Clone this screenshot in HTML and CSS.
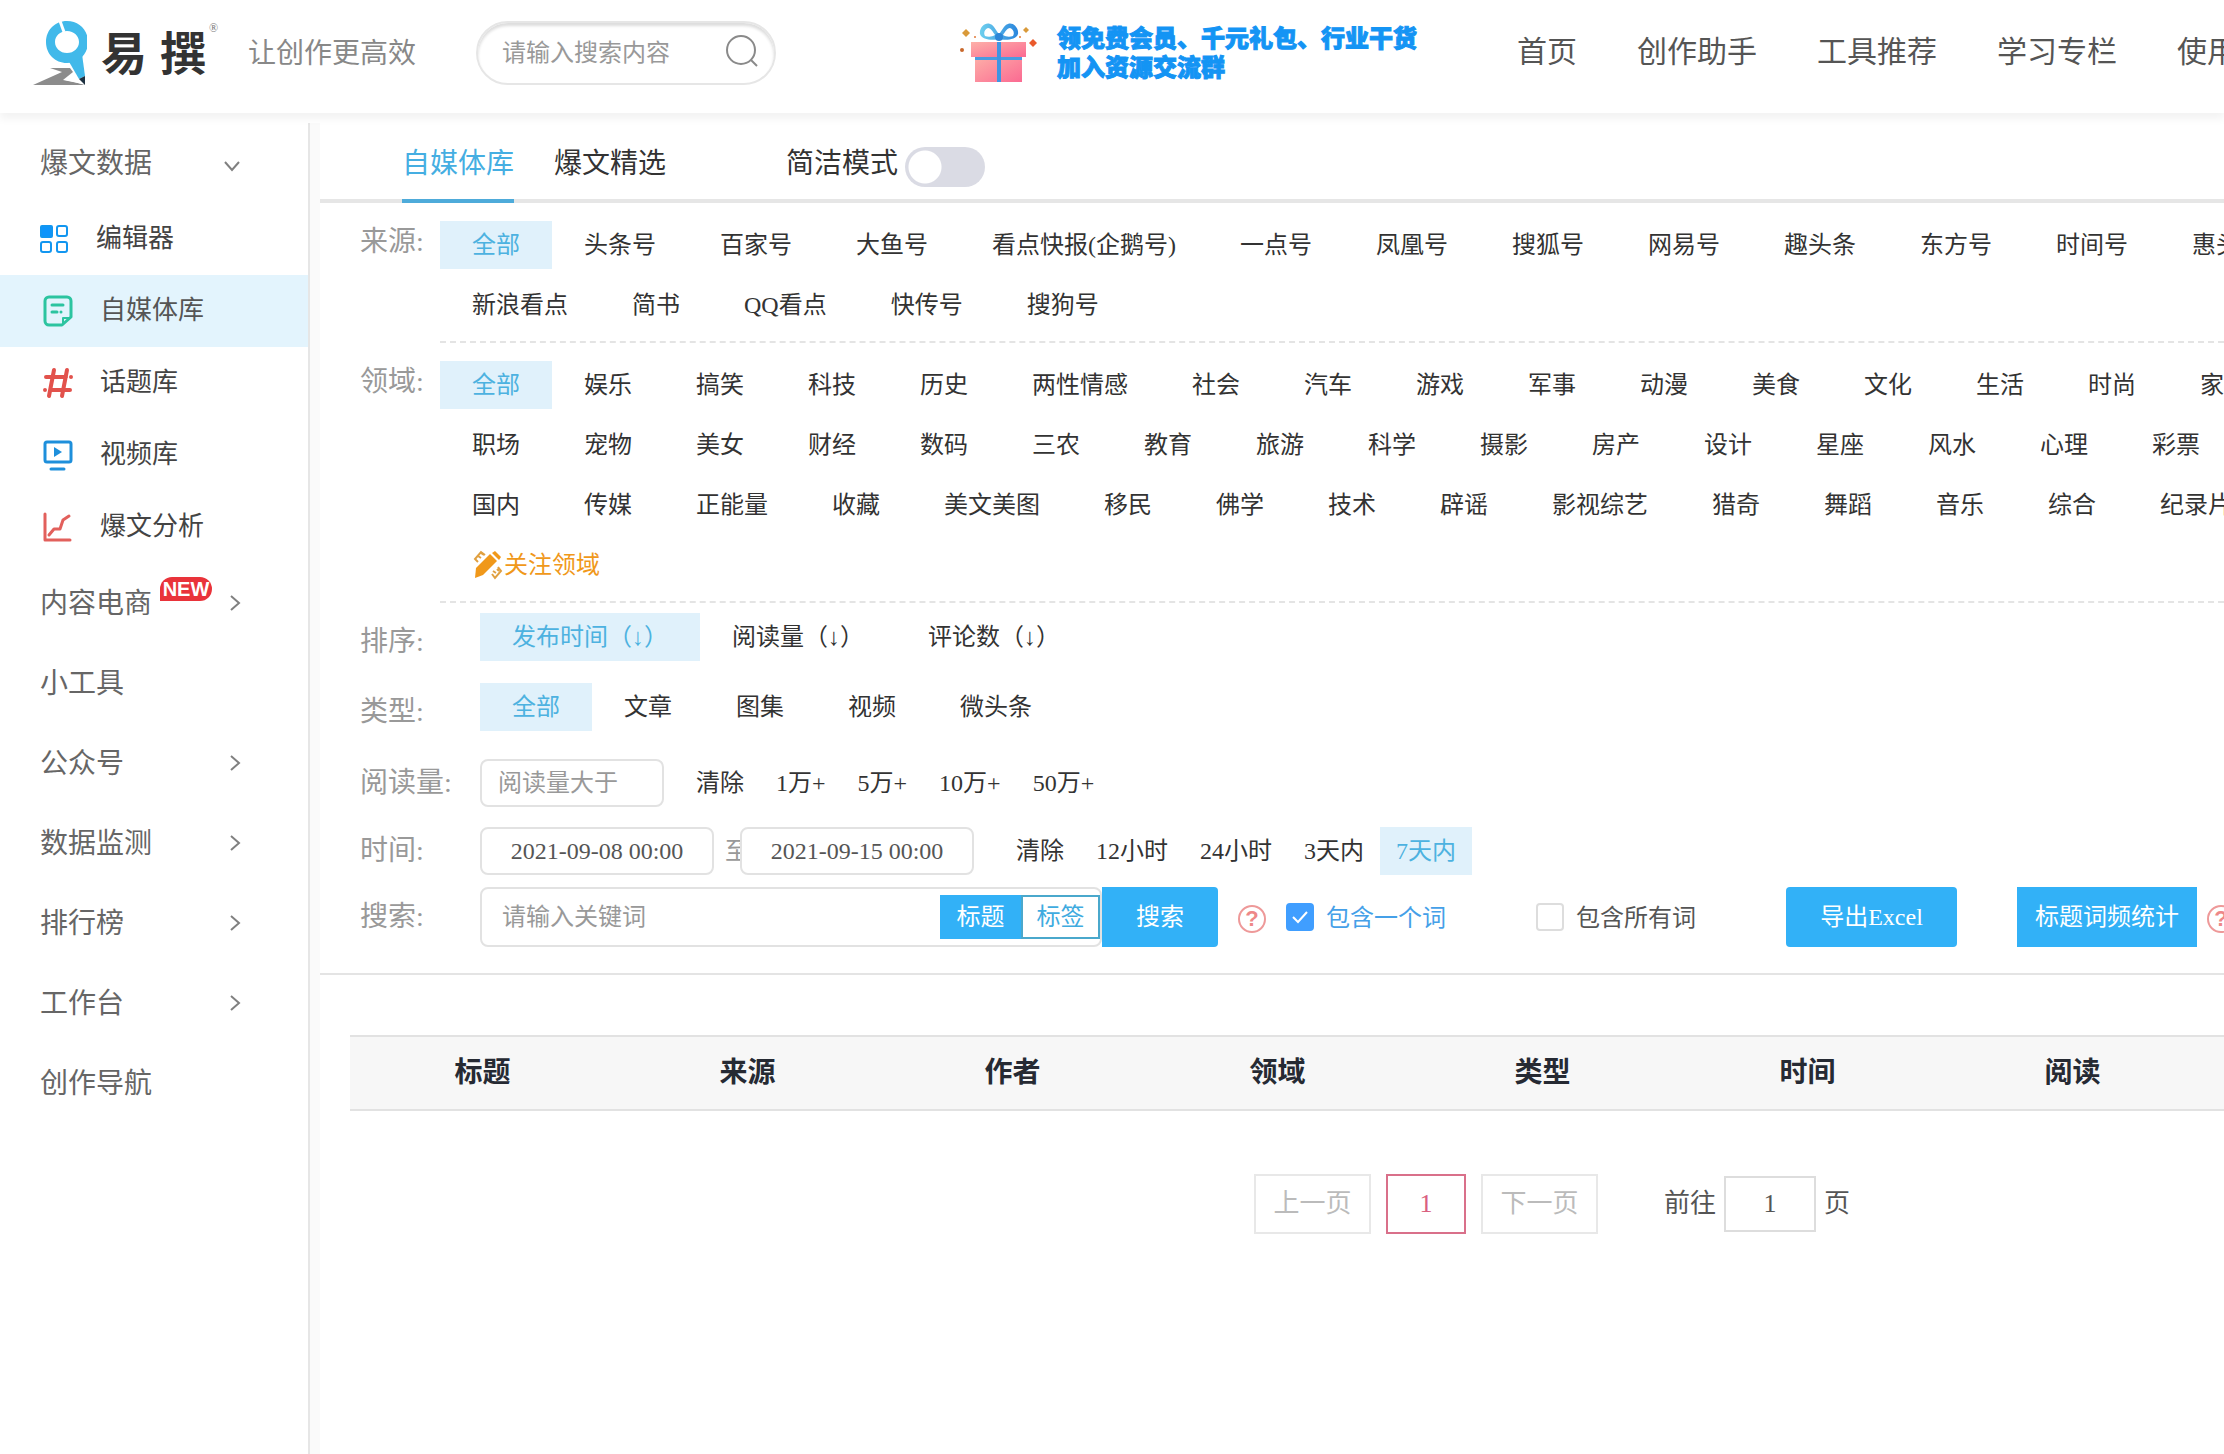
FILE: index.html
```html
<!DOCTYPE html>
<html lang="zh-CN">
<head>
<meta charset="utf-8">
<meta name="viewport" content="width=device-width, initial-scale=1">
<title>易撰 - 自媒体库</title>
<link rel="stylesheet" href="styles.css">
</head>
<body>
<header class="header">
  <a class="logo" href="#">
    <svg class="logo-mark" viewBox="33 20 54 66" aria-hidden="true">
      <path d="M50 68h20l3 4-10 8 20 4 2 1H33l29-13z" fill="#8c8c8c"/>
      <path d="M73 77l5 2 7 6-11-3-9-2z" fill="#fff"/>
      <path d="M68 60l14-6 3 22-6 3z" fill="#41b9ea"/>
      <path d="M79 79l6-3v9z" fill="#1d3040"/>
      <path fill-rule="evenodd" d="M67 21c12 0 21 9 21 21S79 63 67 63 46 54 46 42s9-21 21-21zm0 10c-7 0-12 5-12 11s5 11 12 11 12-5 12-11-5-11-12-11z" fill="#41b9ea"/>
      <path d="M60 21l4 11" stroke="#fff" stroke-width="3"/>
    </svg>
    <span class="logo-name"><span>易</span><span>撰</span></span>
    <sup class="logo-reg">®</sup>
  </a>
  <p class="slogan">让创作更高效</p>
  <form class="site-search">
    <input class="site-search-input" type="text" placeholder="请输入搜索内容" aria-label="搜索内容">
    <button class="icon-button" type="button" aria-label="搜索">
      <svg width="32" height="32" viewBox="0 0 32 32" fill="none" stroke="#8a8a8a" stroke-width="2"><circle cx="15" cy="15" r="14"/><path d="M25 25l6 6"/></svg>
    </button>
  </form>
  <a class="promo" href="#">
    <svg class="gift" width="78" height="62" viewBox="0 0 78 62" aria-hidden="true">
      <defs>
        <linearGradient id="box" x1="0" y1="0" x2="1" y2="1"><stop offset="0" stop-color="#fdb0a8"/><stop offset="1" stop-color="#fb6a92"/></linearGradient>
        <linearGradient id="bow" x1="0" y1="0" x2="1" y2="0"><stop offset="0" stop-color="#6fd0ee"/><stop offset="1" stop-color="#2a86dd"/></linearGradient>
      </defs>
      <path d="M15 34h47v26H15z" fill="url(#box)"/>
      <path d="M11 20h55v15H11z" fill="url(#box)"/>
      <path d="M15 35h47v3H15z" fill="#4a9be0"/>
      <path d="M37 20h4v40h-4z" fill="#3f94e2"/>
      <path fill-rule="evenodd" d="M39 17C35 18 22 19 20 12c-1-6 5-12 10-10 4 1 6 7 9 10 3-3 5-9 9-10 5-2 11 4 10 10-2 7-15 6-19 5zM25 14c3 1 7 1 10-1-2-3-4-7-7-7-3 1-5 5-3 8zm28 0c2-3 0-7-3-8-3 0-5 4-7 7 3 2 7 2 10 1z" fill="url(#bow)"/>
      <circle cx="39" cy="15" r="4" fill="#2c86d8"/>
      <path d="M6 7l4 4-4 4-4-4z" fill="#d99a3a"/><path d="M66 5l3 3-3 3-3-3z" fill="#d99a3a"/><path d="M73 17l4 4-4 4-4-4z" fill="#ea5a2c"/><circle cx="2" cy="28" r="2" fill="#c9682c"/><circle cx="15" cy="15" r="1" fill="#e07a3a"/><circle cx="60" cy="15" r="1" fill="#e07a3a"/>
    </svg>
    <span class="promo-text">领免费会员、千元礼包、行业干货<br>加入资源交流群</span>
  </a>
  <nav class="top-nav">
    <a href="#">首页</a><a href="#">创作助手</a><a href="#">工具推荐</a><a href="#">学习专栏</a><a href="#">使用教程</a>
  </nav>
</header>

<div class="layout">
  <aside class="sidebar">
    <a class="group" href="#">爆文数据<svg class="arrow down" viewBox="0 0 18 18"><path d="M2 5l7 8 7-8"/></svg></a>
    <a class="item editor" href="#">
      <svg width="28" height="28" viewBox="0 0 28 28" fill="none" stroke="#1296f0" stroke-width="2"><rect x="1" y="1" width="11" height="11" rx="1" fill="#0d94fb"/><rect x="17" y="1" width="10" height="10" rx="2"/><rect x="1" y="17" width="10" height="10" rx="2"/><rect x="17" y="17" width="10" height="10" rx="2"/></svg>编辑器</a>
    <a class="item selected" href="#">
      <svg width="30" height="32" viewBox="0 0 30 32" fill="none" stroke="#2cc4a0" stroke-width="3" stroke-linecap="round" stroke-linejoin="round"><path d="M19 30H6a4 4 0 0 1-4-4V6a4 4 0 0 1 4-4h18a4 4 0 0 1 4 4v16z"/><path d="M20 29v-6h7" stroke-width="2"/><path d="M9 10h11M9 17h5M18 17h0"/></svg>自媒体库</a>
    <a class="item" href="#">
      <svg width="30" height="32" viewBox="1 0 30 32" fill="none" stroke="#e2524c" stroke-width="4" stroke-linecap="round"><path d="M12 3L7 29M25 3l-5 26M4 10h20M9 23h19"/><path d="M29 10h0M3 23h0"/></svg>话题库</a>
    <a class="item" href="#">
      <svg width="30" height="32" viewBox="0 0 30 32" fill="none" stroke="#1e8fdb" stroke-width="3" stroke-linecap="round"><rect x="2" y="3" width="26" height="20" rx="2"/><path d="M8 30h13"/><path d="M11 8l8 5-8 5z" fill="#1e8fdb" stroke="none"/></svg>视频库</a>
    <a class="item" href="#">
      <svg width="30" height="32" viewBox="0 0 30 32" fill="none" stroke="#e2605c" stroke-width="3" stroke-linecap="round" stroke-linejoin="round"><path d="M2 3v26h25M6 24l5-6h6l3-9 6-4"/></svg>爆文分析</a>
    <a class="group" href="#">内容电商<span class="badge">NEW</span><svg class="arrow" viewBox="0 0 18 18"><path d="M5 2l8 7-8 7"/></svg></a>
    <a class="group" href="#">小工具</a>
    <a class="group" href="#">公众号<svg class="arrow" viewBox="0 0 18 18"><path d="M5 2l8 7-8 7"/></svg></a>
    <a class="group" href="#">数据监测<svg class="arrow" viewBox="0 0 18 18"><path d="M5 2l8 7-8 7"/></svg></a>
    <a class="group" href="#">排行榜<svg class="arrow" viewBox="0 0 18 18"><path d="M5 2l8 7-8 7"/></svg></a>
    <a class="group" href="#">工作台<svg class="arrow" viewBox="0 0 18 18"><path d="M5 2l8 7-8 7"/></svg></a>
    <a class="group" href="#">创作导航</a>
  </aside>

  <main class="main">
    <div class="tabs">
      <a class="tab active" href="#">自媒体库</a>
      <a class="tab" href="#">爆文精选</a>
      <label class="mode">简洁模式<input class="switch" type="checkbox"></label>
    </div>

    <section class="filters">
      <div class="filter-block">
        <h2 class="label">来源:</h2>
        <div class="lines">
          <div class="line"><a class="on" href="#">全部</a><a href="#">头条号</a><a href="#">百家号</a><a href="#">大鱼号</a><a href="#">看点快报(企鹅号)</a><a href="#">一点号</a><a href="#">凤凰号</a><a href="#">搜狐号</a><a href="#">网易号</a><a href="#">趣头条</a><a href="#">东方号</a><a href="#">时间号</a><a href="#">惠头条</a></div>
          <div class="line"><a href="#">新浪看点</a><a href="#">简书</a><a href="#">QQ看点</a><a href="#">快传号</a><a href="#">搜狗号</a></div>
        </div>
      </div>
      <div class="filter-block">
        <h2 class="label">领域:</h2>
        <div class="lines">
          <div class="line"><a class="on" href="#">全部</a><a href="#">娱乐</a><a href="#">搞笑</a><a href="#">科技</a><a href="#">历史</a><a href="#">两性情感</a><a href="#">社会</a><a href="#">汽车</a><a href="#">游戏</a><a href="#">军事</a><a href="#">动漫</a><a href="#">美食</a><a href="#">文化</a><a href="#">生活</a><a href="#">时尚</a><a href="#">家居</a></div>
          <div class="line"><a href="#">职场</a><a href="#">宠物</a><a href="#">美女</a><a href="#">财经</a><a href="#">数码</a><a href="#">三农</a><a href="#">教育</a><a href="#">旅游</a><a href="#">科学</a><a href="#">摄影</a><a href="#">房产</a><a href="#">设计</a><a href="#">星座</a><a href="#">风水</a><a href="#">心理</a><a href="#">彩票</a></div>
          <div class="line"><a href="#">国内</a><a href="#">传媒</a><a href="#">正能量</a><a href="#">收藏</a><a href="#">美文美图</a><a href="#">移民</a><a href="#">佛学</a><a href="#">技术</a><a href="#">辟谣</a><a href="#">影视综艺</a><a href="#">猎奇</a><a href="#">舞蹈</a><a href="#">音乐</a><a href="#">综合</a><a href="#">纪录片</a></div>
          <div class="line follow-line"><a class="follow" href="#"><svg width="30" height="30" viewBox="0 0 30 30" fill="none" stroke="#e0a040" stroke-width="2"><path d="M12 5L8 2 2 9l3 3M5 6l3 2M8 3l3 2M19 24l3 4 6-7-3-4M20 21l3 2M24 19l2 2"/><path d="M3 18L17 4l7 7L10 25l-8 3z" fill="#f0981a" stroke="none"/><path d="M19 3l3-2 6 6-2 3z" fill="#f0981a" stroke="none"/></svg>关注领域</a></div>
        </div>
      </div>

      <div class="filter-row tall">
        <h2 class="label">排序:</h2>
        <div class="line"><a class="on" href="#">发布时间（↓）</a><a href="#">阅读量（↓）</a><a href="#">评论数（↓）</a></div>
      </div>
      <div class="filter-row tall">
        <h2 class="label">类型:</h2>
        <div class="line"><a class="on" href="#">全部</a><a href="#">文章</a><a href="#">图集</a><a href="#">视频</a><a href="#">微头条</a></div>
      </div>
      <div class="filter-row">
        <label class="label" for="reads">阅读量:</label>
        <input class="field reads" id="reads" type="text" placeholder="阅读量大于">
        <div class="line compact"><a href="#">清除</a><a href="#">1万+</a><a href="#">5万+</a><a href="#">10万+</a><a href="#">50万+</a></div>
      </div>
      <div class="filter-row">
        <label class="label" for="from">时间:</label>
        <input class="field date" id="from" type="text" value="2021-09-08 00:00">
        <span class="to">至</span>
        <input class="field date end" type="text" value="2021-09-15 00:00" aria-label="结束时间">
        <div class="line compact after-dates"><a href="#">清除</a><a href="#">12小时</a><a href="#">24小时</a><a href="#">3天内</a><a class="on" href="#">7天内</a></div>
      </div>
      <div class="filter-row search-row">
        <label class="label" for="keyword">搜索:</label>
        <div class="keyword-box">
          <input class="keyword" id="keyword" type="text" placeholder="请输入关键词">
          <button class="scope chosen" type="button">标题</button><button class="scope" type="button">标签</button>
        </div>
        <button class="primary search" type="button">搜索</button>
        <span class="help">?</span>
        <label class="check any"><input type="checkbox" checked>包含一个词</label>
        <label class="check"><input type="checkbox">包含所有词</label>
        <button class="primary export" type="button">导出Excel</button>
        <button class="primary stats" type="button">标题词频统计</button>
        <span class="help last">?</span>
      </div>
    </section>

    <div class="results">
      <table class="table">
        <colgroup><col class="col"><col class="col"><col class="col"><col class="col"><col class="col"><col class="col"><col class="col"><col></colgroup>
        <thead><tr><th>标题</th><th>来源</th><th>作者</th><th>领域</th><th>类型</th><th>时间</th><th>阅读</th><td></td></tr></thead>
      </table>
    </div>

    <nav class="pager" aria-label="分页">
      <button class="page-button" type="button" disabled>上一页</button>
      <button class="page-button current" type="button">1</button>
      <button class="page-button" type="button" disabled>下一页</button>
      <label class="goto">前往<input type="text" value="1">页</label>
    </nav>
  </main>
</div>
</body>
</html>
```

FILE: styles.css
```css
* { box-sizing: border-box; }

body {
  margin: 0;
  overflow-x: hidden;
  background: #fff;
  color: #333;
  font: 24px/48px "Liberation Serif", "Noto Sans CJK SC", serif;
}

a { color: inherit; text-decoration: none; }
input, button { font: inherit; color: inherit; margin: 0; border-radius: 0; }
button { cursor: pointer; padding: 0; border: 0; background: none; }
h2, p { margin: 0; font-weight: normal; }
svg { flex: none; display: block; }
::placeholder { color: #999; opacity: 1; }

/* Header */
.header {
  position: relative;
  z-index: 1;
  display: flex;
  align-items: center;
  height: 113px;
  padding: 0 0 8px 33px;
  overflow-x: clip;
  white-space: nowrap;
  background: #fff;
  box-shadow: 0 6px 8px rgba(0, 0, 0, .05);
}
.header > * { flex: none; }
.logo { display: flex; align-items: center; width: 215px; color: #333; }
.logo-mark { width: 54px; height: 66px; }
.logo-name { display: flex; gap: 13px; margin-left: 14px; padding-top: 4px; font-size: 46px; font-weight: 700; }
.logo-reg { align-self: flex-start; margin-left: 3px; font-size: 12px; line-height: 16px; color: #777; }
.slogan { width: 228px; padding-top: 2px; font-size: 28px; color: #888; }
.site-search {
  display: flex;
  align-items: center;
  width: 300px;
  height: 64px;
  padding: 0 16px 0 24px;
  border: 2px solid #e6e6e6;
  border-radius: 32px;
  box-shadow: inset 0 3px 3px #ddd;
}
.site-search-input { flex: 1; min-width: 0; padding: 0; border: 0; outline: 0; background: none; }
.icon-button { width: 32px; height: 32px; margin-bottom: 4px; }
.promo { display: flex; align-items: center; gap: 19px; margin-left: 184px; width: 557px; }
.promo-text {
  padding-top: 2px;
  font-size: 24px;
  line-height: 29px;
  font-weight: 900;
  color: #1494f4;
  -webkit-text-stroke: 1px #1494f4;
}
.top-nav { display: flex; gap: 60px; font-size: 30px; line-height: 46px; padding-bottom: 2px; color: #555; }

/* Page frame */
.layout { display: flex; min-height: calc(100vh - 123px); margin-top: 10px; background: #fafafa; }

.sidebar { flex: none; width: 310px; border-right: 2px solid #e6e6e6; background: #fff; }
.group {
  display: flex;
  align-items: center;
  height: 80px;
  padding: 2px 64px 0 40px;
  font-size: 28px;
  color: #666;
}
.arrow { width: 18px; height: 18px; margin: 0 0 2px auto; fill: none; stroke: #808080; stroke-width: 2; }
.arrow.down { margin: 4px 3px 0 auto; }
.badge {
  align-self: flex-start;
  width: 52px;
  margin: 12px 0 0 8px;
  border-radius: 12px 12px 12px 0;
  background: #e9333a;
  color: #fff;
  font: 700 20px/24px "Liberation Sans", sans-serif;
  text-align: center;
}
.item { display: flex; align-items: center; gap: 27px; height: 72px; padding-left: 43px; font-size: 26px; color: #444; }
.item.editor { padding-left: 40px; gap: 28px; }
.item.selected { background: #e3f4fd; color: #555; }

.main { flex: 1; min-width: 0; margin-left: 10px; overflow: hidden; background: #fff; }

/* Tabs */
.tabs { display: flex; height: 80px; padding-left: 82px; border-bottom: 4px solid #e6e6e6; font-size: 28px; line-height: 82px; }
.tab { height: 80px; margin-right: 40px; }
.tab.active { color: #45aee2; border-bottom: 4px solid #4eabda; }
.mode { display: flex; align-items: center; gap: 7px; height: 82px; margin-left: 80px; }
.switch {
  appearance: none;
  width: 80px;
  height: 40px;
  margin-top: 6px;
  border-radius: 20px;
  background: radial-gradient(circle at 20px 20px, #fff 16px, #dadbe4 17px);
}

/* Filters */
.filters { padding-bottom: 26px; border-bottom: 2px solid #e4e4e4; white-space: nowrap; }
.label { flex: none; font-size: 28px; color: #999; }
.filter-block { display: flex; padding-left: 40px; }
.filter-block .label { width: 80px; padding-top: 18px; line-height: 42px; }
.lines { display: flex; flex: 1; flex-direction: column; gap: 12px; min-width: 0; padding: 18px 0 12px; border-bottom: 2px dashed #e4e4e4; }
.line { display: flex; height: 48px; }
.line a { flex: none; padding: 0 32px; }
.line .on { color: #4db2e0; background: #e0f1fb; }
.follow-line { align-items: flex-end; height: 48px; }
.follow-line .follow { display: flex; align-items: center; gap: 1px; padding: 6px 33px 0; color: #f0981a; line-height: 48px; }

.filter-row { display: flex; align-items: center; margin-top: 20px; padding-left: 40px; }
.filter-row .label { width: 120px; }
.filter-row.tall { align-items: flex-start; height: 56px; margin-top: 14px; }
.filter-row.tall .label { line-height: 58px; }
.filter-block + .filter-row.tall { margin-top: 10px; }
.compact { margin-left: 16px; }
.compact a { padding: 0 16px; }
.after-dates { margin-left: 26px; }
.field { flex: none; height: 48px; border: 2px solid #e2e2e2; border-radius: 8px; background: #fff; outline: 0; }
.reads { width: 184px; padding: 0 16px; }
.date { width: 234px; padding: 0; text-align: center; color: #555; }
.to { width: 15px; margin-left: 11px; color: #999; }

.filter-row.search-row { margin-top: 12px; }
.search-row > * { flex: none; }
.keyword-box { display: flex; align-items: center; width: 622px; height: 60px; padding-left: 20px; border: 2px solid #e2e2e2; border-radius: 8px; }
.keyword { flex: 1; min-width: 0; height: 44px; padding: 0; border: 0; outline: 0; background: none; }
.scope { width: 79px; height: 44px; line-height: 40px; border: 2px solid #4aa8cc; color: #3fabdf; background: #fff; }
.scope.chosen { width: 81px; border-color: #32b1f7; color: #fff; background: #32b1f7; }
.primary { height: 60px; color: #fff; background: #32b1f7; }
.search { width: 116px; border-radius: 0 4px 4px 0; }
.help { width: 28px; height: 28px; margin: 4px 20px 0; border: 2px solid #e99; border-radius: 50%; color: #e88; font: 700 22px/24px "Liberation Sans", sans-serif; text-align: center; }
.help.last { margin: 4px 0 0 10px; }
.check { display: flex; align-items: center; gap: 12px; width: 250px; padding-top: 2px; color: #555; }
.check.any { color: #45a0e8; }
.check input { appearance: none; width: 28px; height: 28px; margin-bottom: 2px; border: 2px solid #ddd; border-radius: 4px; }
.check input:checked {
  border-color: #409eff;
  background: #409eff url("data:image/svg+xml,%3Csvg xmlns='http://www.w3.org/2000/svg' viewBox='0 0 24 24' fill='none' stroke='white' stroke-width='2'%3E%3Cpath d='M5 12l5 5 9-10'/%3E%3C/svg%3E") center / 24px no-repeat;
}
.export { width: 171px; border-radius: 4px; }
.stats { width: 180px; margin-left: 60px; }

/* Results */
.results { margin: 60px 0 0 30px; }
.table { width: 100%; table-layout: fixed; border-collapse: collapse; background: #f7f7f7; }
.col { width: 265px; }
.table th, .table td { height: 74px; padding: 0; border: solid #e2e2e2; border-width: 2px 0; font-size: 28px; color: #262a33; }

/* Pagination */
.pager { display: flex; align-items: center; gap: 15px; margin: 63px 0 0 934px; font-size: 26px; }
.page-button { width: 117px; height: 60px; border: 2px solid #e8e8e8; color: #bbb; }
.page-button.current { width: 80px; border-color: #d9708a; color: #d9607f; }
.goto { display: flex; align-items: center; gap: 8px; margin-left: 51px; color: #555; }
.goto input { width: 92px; height: 56px; padding: 0; border: 2px solid #ddd; text-align: center; }
```
